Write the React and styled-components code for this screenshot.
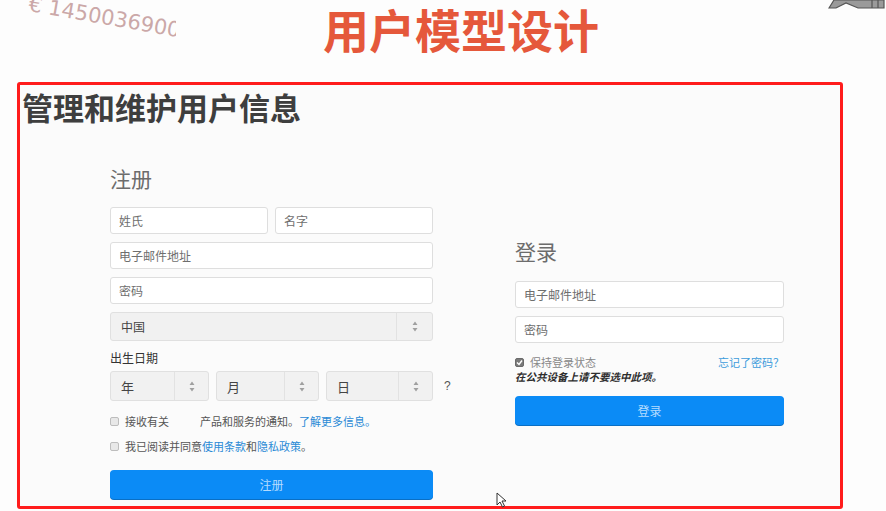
import styled, { createGlobalStyle } from 'styled-components';

const GlobalStyle = createGlobalStyle`
  html, body {
    margin: 0;
    padding: 0;
    background: #fdfdfd;
    font-family: "Noto Sans CJK SC", "Noto Sans", sans-serif;
    overflow: hidden;
  }
`;

const Page = styled.div`
  position: relative;
  width: 886px;
  height: 511px;
  overflow: hidden;
  background: #fdfdfd;
`;

const Header = styled.header`
  height: 82px;
  padding-left: 36px;
  text-align: center;
  box-sizing: border-box;
`;

const Title = styled.h1`
  margin: 0;
  padding-top: 5px;
  font-size: 46px;
  line-height: 46px;
  font-weight: 700;
  color: #e5583b;
`;

const Watermark = styled.div`
  position: absolute;
  top: 0;
  left: 0;
  width: 176px;
  height: 46px;
  overflow: hidden;
  pointer-events: none;

  span {
    position: absolute;
    left: 31px;
    top: -8px;
    white-space: nowrap;
    font-family: "DejaVu Sans", sans-serif;
    font-size: 21px;
    color: #cba8a8;
    transform: rotate(10deg);
    transform-origin: left top;
  }
`;

const CornerIcon = styled.svg`
  position: absolute;
  top: 0;
  right: 0;
`;

const Frame = styled.section`
  margin-left: 17px;
  width: 826px;
  height: 427px;
  box-sizing: border-box;
  border: 3px solid #ff1c1c;
  border-radius: 3px;
  background: #fbfbfb;
`;

const Heading = styled.h2`
  margin: 3px 0 0 2px;
  font-size: 31px;
  line-height: 37px;
  font-weight: 700;
  color: #3e3e3e;
`;

const Columns = styled.div`
  display: flex;
  align-items: flex-start;
  gap: 82px;
  margin-top: 39px;
  padding-left: 90px;
`;

const Column = styled.div`
  display: flex;
  flex-direction: column;
  width: ${({ $width }) => $width}px;
  margin-top: ${({ $offset }) => $offset || 0}px;
`;

const SectionTitle = styled.h3`
  margin: 0 0 ${({ $gap }) => $gap}px;
  font-size: 21px;
  line-height: 28px;
  font-weight: 400;
  color: #6c6c6c;
`;

const Stack = styled.div`
  display: flex;
  flex-direction: column;
  gap: 8px;
`;

const Row = styled.div`
  display: flex;
  gap: 7px;

  & > * {
    flex: 1;
  }
`;

const Input = styled.input`
  width: 100%;
  min-width: 0;
  height: 27px;
  box-sizing: border-box;
  padding: 0 8px;
  border: 1px solid #dedede;
  border-radius: 3px;
  background: #fff;
  font-family: "Noto Sans CJK SC", sans-serif;
  font-size: 12px;
  outline: none;

  &::placeholder {
    color: #6e6e6e;
  }
`;

const Select = styled.div`
  display: flex;
  align-items: stretch;
  height: ${({ $h }) => $h}px;
  box-sizing: border-box;
  border: 1px solid #e0e0e0;
  border-radius: 3px;
  background: #f1f1f1;
  font-size: ${({ $size }) => $size}px;
  color: #444;
`;

const SelectValue = styled.span`
  flex: 1;
  display: flex;
  align-items: center;
  padding-left: ${({ $pad }) => $pad}px;
`;

const ArrowCell = styled.span`
  width: ${({ $w }) => $w}px;
  display: flex;
  align-items: center;
  justify-content: center;
  border-left: 1px solid #e2e2e2;
`;

const Label = styled.div`
  margin: 9px 0 5px;
  font-size: 12px;
  line-height: 16px;
  color: #333;
`;

const DateRow = styled.div`
  display: grid;
  grid-template-columns: 99px 103px 107px 1fr;
  gap: 7px;
  margin-right: -24px;
  align-items: center;
`;

const Hint = styled.span`
  padding-left: 4px;
  font-size: 12px;
  color: #555;
  font-family: "Liberation Sans", sans-serif;
`;

const CheckRow = styled.label`
  display: flex;
  align-items: center;
  gap: 6px;
  margin-top: ${({ $top }) => $top}px;
  font-size: 11px;
  line-height: 16px;
  color: ${({ $muted }) => ($muted ? '#888' : '#555')};
`;

const Box = styled.span`
  display: flex;
  align-items: center;
  justify-content: center;
  width: 9px;
  height: 9px;
  box-sizing: border-box;
  border: 1px solid ${({ $checked }) => ($checked ? '#6a6a6a' : '#bdbdbd')};
  border-radius: 2px;
  background: ${({ $checked }) => ($checked ? '#7a7a7a' : '#e8e8e8')};
  flex-shrink: 0;
`;

const Gap = styled.span`
  display: inline-block;
  width: 31px;
`;

const Link = styled.a`
  color: #2a8ad6;
  text-decoration: none;
`;

const Spread = styled.div`
  display: flex;
  justify-content: space-between;
  align-items: center;
  margin-top: 11px;
`;

const Forgot = styled(Link)`
  font-size: 11px;
  line-height: 16px;
  color: #3b9bdc;
`;

const Note = styled.div`
  font-size: 10.5px;
  line-height: 14px;
  font-weight: 700;
  font-style: italic;
  color: #2e2e2e;
`;

const Button = styled.button`
  margin-top: ${({ $top }) => $top}px;
  height: 29px;
  border: none;
  border-radius: 4px;
  background: #0b8bf6;
  box-shadow: 0 1px 0 #0a6fc4;
  color: #b5dcff;
  font-family: "Noto Sans CJK SC", sans-serif;
  font-size: 12px;
`;

const Cursor = styled.svg`
  position: absolute;
  left: 496px;
  top: 492px;
`;

const Arrows = ({ w }) => (
  <ArrowCell $w={w}>
    <svg width="6" height="11" viewBox="0 0 6 11">
      <path d="M3 0.5 L5.5 4 L0.5 4 Z M3 10.5 L5.5 7 L0.5 7 Z" fill="#a0a0a0" />
    </svg>
  </ArrowCell>
);

const DateSelect = ({ label }) => (
  <Select $h={30} $size={13}>
    <SelectValue $pad={10}>{label}</SelectValue>
    <Arrows w={33} />
  </Select>
);

const Check = ({ checked }) => (
  <Box $checked={checked}>
    {checked && (
      <svg width="7" height="7" viewBox="0 0 7 7">
        <path d="M1 3.5 L3 5.5 L6 1.5" fill="none" stroke="#fff" strokeWidth="1.4" />
      </svg>
    )}
  </Box>
);

export default function App() {
  return (
    <Page>
      <GlobalStyle />
      <Watermark>
        <span>€ 14500369000</span>
      </Watermark>
      <CornerIcon width="58" height="9" viewBox="0 0 58 9">
        <path d="M1 8 L6 0 L56 0 L56 8 L30 8 L18 3 L8 8 Z" fill="#9a9a9a" stroke="#555" strokeWidth="1.2" />
        <path d="M44 0 V8 M50 0 V8" stroke="#555" strokeWidth="1.2" />
      </CornerIcon>

      <Header>
        <Title>用户模型设计</Title>
      </Header>

      <Frame>
        <Heading>管理和维护用户信息</Heading>
        <Columns>
          <Column $width={323}>
            <SectionTitle $gap={15}>注册</SectionTitle>
            <Stack>
              <Row>
                <Input placeholder="姓氏" />
                <Input placeholder="名字" />
              </Row>
              <Input placeholder="电子邮件地址" />
              <Input placeholder="密码" />
              <Select $h={29} $size={12}>
                <SelectValue $pad={10}>中国</SelectValue>
                <Arrows w={35} />
              </Select>
            </Stack>
            <Label>出生日期</Label>
            <DateRow>
              <DateSelect label="年" />
              <DateSelect label="月" />
              <DateSelect label="日" />
              <Hint>?</Hint>
            </DateRow>
            <CheckRow $top={12}>
              <Check />
              <span>
                接收有关<Gap />产品和服务的通知。<Link>了解更多信息。</Link>
              </span>
            </CheckRow>
            <CheckRow $top={9}>
              <Check />
              <span>
                我已阅读并同意<Link>使用条款</Link>和<Link>隐私政策</Link>。
              </span>
            </CheckRow>
            <Button $top={16}>注册</Button>
          </Column>

          <Column $width={269} $offset={73}>
            <SectionTitle $gap={16}>登录</SectionTitle>
            <Stack>
              <Input placeholder="电子邮件地址" />
              <Input placeholder="密码" />
            </Stack>
            <Spread>
              <CheckRow $top={0} $muted>
                <Check checked />
                <span>保持登录状态</span>
              </CheckRow>
              <Forgot>忘记了密码？</Forgot>
            </Spread>
            <Note>在公共设备上请不要选中此项。</Note>
            <Button $top={12}>登录</Button>
          </Column>
        </Columns>
      </Frame>

      <Cursor width="12" height="16" viewBox="0 0 12 16">
        <path d="M1 1 L1 13 L4 10 L6.5 15 L8.5 14 L6 9 L10 9 Z" fill="#fff" stroke="#333" strokeWidth="1" />
      </Cursor>
    </Page>
  );
}
